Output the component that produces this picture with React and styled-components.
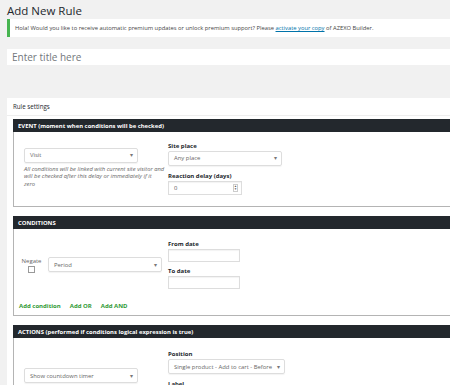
import React from 'react'
import styled, { createGlobalStyle } from 'styled-components'

const Global = createGlobalStyle`
body{
  margin:0;
  background:#f1f1f1;
  overflow:hidden;
  font-family:"Open Sans","Noto Sans",sans-serif;
  color:#23282d;
}
`
const Wrap = styled.div`
width:463px;
padding-left:7px;
`
const Title = styled.h1`
margin:0;
padding-top:3px;
font-size:11.5px;
font-weight:400;
line-height:16px;
color:#23282d;
`
const Notice = styled.div`
margin-top:0;
height:18px;
background:#fff;
border-left:3px solid #46b450;
padding-left:5px;
display:flex;
align-items:center;
font-size:5.8px;
color:#444;
a{color:#0073aa;text-decoration:underline;}
`
const TitleInput = styled.div`
margin-top:12px;
height:16px;
background:#fff;
display:flex;
align-items:center;
padding-left:5px;
font-size:10px;
color:#72777c;
`
const Panel = styled.div`
margin-top:33px;
background:#fff;
padding-bottom:10px;
`
const PanelHead = styled.div`
height:17px;
border-bottom:1px solid #eee;
display:flex;
align-items:center;
padding-left:6px;
font-size:6.2px;
color:#23282d;
`
const PanelBody = styled.div`
padding:3px 0 0 6px;
display:flex;
flex-direction:column;
gap:9px;
`
const SectionHead = styled.div`
height:13px;
background:#23282d;
color:#fff;
font-weight:700;
font-size:5.9px;
display:flex;
align-items:center;
padding-left:5px;
`
const SectionBody = styled.div`
border:1px solid #b4b4b4;
border-top:none;
height:${p => p.$h}px;
box-sizing:border-box;
padding:${p => p.$pad};
`
const Row = styled.div`
display:flex;
align-items:${p => p.$align || 'center'};
gap:4px;
height:${p => p.$h}px;
`
const Col = styled.div`
display:flex;
flex-direction:column;
width:${p => p.$w}px;
margin-top:${p => p.$top || 0}px;
`
const Select = styled.div`
width:${p => p.$w}px;
height:15px;
box-sizing:border-box;
border:1px solid #ddd;
border-radius:2px;
box-shadow:0 1px 1px rgba(0,0,0,.05);
display:flex;
align-items:center;
justify-content:space-between;
padding:0 4px 0 5px;
font-size:5.9px;
color:#666;
white-space:nowrap;
&::after{content:"▾";font-size:6px;color:#777;}
`
const Input = styled.div`
width:${p => p.$w}px;
height:${p => p.$h || 14}px;
box-sizing:border-box;
border:1px solid #ddd;
box-shadow:inset 0 1px 1px rgba(0,0,0,.05);
display:flex;
align-items:center;
justify-content:space-between;
padding:0 3px 0 5px;
font-size:5.9px;
color:#555;
`
const Spin = styled.span`
width:5px;
height:8px;
border:1px solid #ccc;
box-sizing:border-box;
display:flex;
flex-direction:column;
justify-content:space-around;
align-items:center;
font-size:3px;
line-height:3px;
color:#555;
`
const Label = styled.div`
font-size:6px;
font-weight:700;
color:#23282d;
line-height:8px;
margin:${p => p.$m || '0 0 1px'};
`
const Help = styled.div`
font-size:5.8px;
font-style:italic;
color:#666;
line-height:7.4px;
margin-top:3px;
white-space:nowrap;
`
const Negate = styled.div`
width:25px;
display:flex;
flex-direction:column;
align-items:center;
font-size:6px;
color:#666;
gap:1px;
`
const Check = styled.div`
width:7px;
height:7px;
border:1px solid #999;
box-sizing:border-box;
background:#fff;
`
const Links = styled.div`
display:flex;
gap:9px;
margin-top:13px;
`
const Link = styled.span`
font-size:6px;
font-weight:700;
color:#2f9a35;
`

export default function App() {
  return (
    <Wrap>
      <Global />
      <Title>Add New Rule</Title>
      <Notice>
        <span>Hola! Would you like to receive automatic premium updates or unlock premium support? Please <a>activate your copy</a> of AZEXO Builder.</span>
      </Notice>
      <TitleInput>Enter title here</TitleInput>
      <Panel>
        <PanelHead>Rule settings</PanelHead>
        <PanelBody>
          <div>
            <SectionHead>EVENT (moment when conditions will be checked)</SectionHead>
            <SectionBody $h={75} $pad="0 0 0 10px">
              <Row $h={72}>
                <Col $w={140}>
                  <Select $w={114}>Visit</Select>
                  <Help>All conditions will be linked with current site visitor and<br />will be checked after this delay or immediately if it<br />zero</Help>
                </Col>
                <Col $w={130}>
                  <Label>Site place</Label>
                  <Select $w={114}>Any place</Select>
                  <Label $m="6px 0 1px">Reaction delay (days)</Label>
                  <Input $w={74}>0<Spin><span>▲</span><span>▼</span></Spin></Input>
                </Col>
              </Row>
            </SectionBody>
          </div>
          <div>
            <SectionHead>CONDITIONS</SectionHead>
            <SectionBody $h={87} $pad="11px 0 0 5px">
              <Row $h={49}>
                <Negate>Negate<Check /></Negate>
                <Select $w={114}>Period</Select>
                <Col $w={90} style={{ marginLeft: 2 }}>
                  <Label>From date</Label>
                  <Input $w={72} $h={13} />
                  <Label $m="5px 0 1px">To date</Label>
                  <Input $w={72} $h={13} />
                </Col>
              </Row>
              <Links>
                <Link>Add condition</Link>
                <Link>Add OR</Link>
                <Link>Add AND</Link>
              </Links>
            </SectionBody>
          </div>
          <div>
            <SectionHead>ACTIONS (performed if conditions logical expression is true)</SectionHead>
            <SectionBody $h={110} $pad="12px 0 0 10px">
              <Row $align="flex-start">
                <Col $w={140} $top={18}>
                  <Select $w={114}>Show countdown timer</Select>
                  <Help>Countdown timer will be displayed for current visitor in<br />selected position</Help>
                </Col>
                <Col $w={130}>
                  <Label>Position</Label>
                  <Select $w={117}>Single product - Add to cart - Before</Select>
                  <Label $m="6px 0 1px">Label</Label>
                  <Input $w={74} />
                </Col>
              </Row>
            </SectionBody>
          </div>
        </PanelBody>
      </Panel>
    </Wrap>
  )
}
